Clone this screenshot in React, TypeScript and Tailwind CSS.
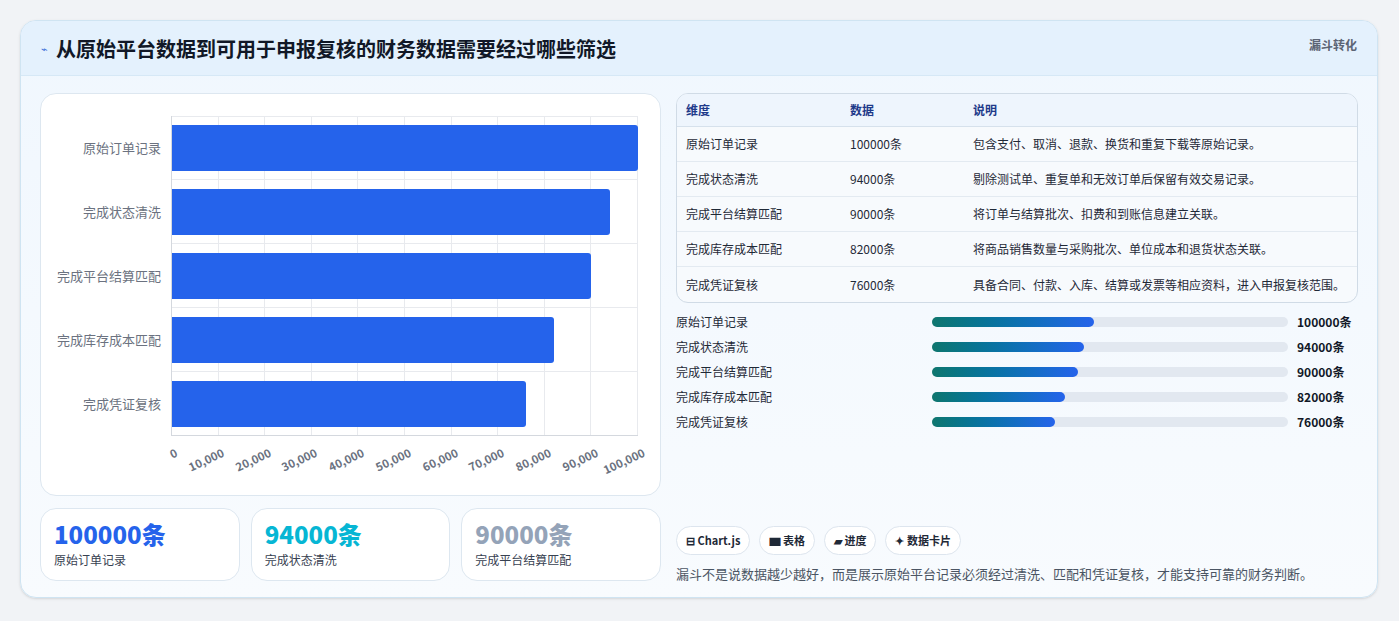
import React from "react";

const rows = [
  { n: "原始订单记录", v: 100000, d: "包含支付、取消、退款、换货和重复下载等原始记录。", p: 162 },
  { n: "完成状态清洗", v: 94000, d: "剔除测试单、重复单和无效订单后保留有效交易记录。", p: 152 },
  { n: "完成平台结算匹配", v: 90000, d: "将订单与结算批次、扣费和到账信息建立关联。", p: 146 },
  { n: "完成库存成本匹配", v: 82000, d: "将商品销售数量与采购批次、单位成本和退货状态关联。", p: 133 },
  { n: "完成凭证复核", v: 76000, d: "具备合同、付款、入库、结算或发票等相应资料，进入申报复核范围。", p: 123 },
];
const ticks = ["0", "10,000", "20,000", "30,000", "40,000", "50,000", "60,000", "70,000", "80,000", "90,000", "100,000"];

export default function App() {
  return (
    <div className="w-[1399px] h-[621px] bg-[#f1f3f6] pt-5 px-5" style={{ fontFamily: "'Noto Sans CJK SC', 'Noto Sans', sans-serif" }}>
      <div className="w-[1358px] h-[578px] rounded-2xl border border-[#cfe4f2] bg-gradient-to-b from-[#f0f7fe] to-[#f8fbfe] overflow-hidden shadow-sm">
        <div className="h-[55px] bg-[#e4f1fd] border-b border-[#d6e8f6] flex items-start justify-between px-5">
          <div className="flex items-center gap-2 h-[55px]">
            <span className="text-[#3b6fd8] text-[11px]">⌁</span>
            <span className="text-[20px] font-bold text-[#111827]">从原始平台数据到可用于申报复核的财务数据需要经过哪些筛选</span>
          </div>
          <span className="text-[12px] font-bold text-[#5b6474] mt-[15px]">漏斗转化</span>
        </div>
        <div className="flex gap-[15px] px-[19px] pt-[17px]">
          <div className="w-[621px] flex flex-col gap-[12px]">
            <div className="h-[403px] rounded-2xl border border-[#dde7f0] bg-white relative">
              <div className="absolute left-[130px] top-[22px] w-[467px] h-[320px] border-l border-b border-[#d4d8de]">
                <div className="absolute inset-0 flex">
                  {ticks.slice(1).map((t) => (
                    <div key={t} className="flex-1 border-r border-[#e8eaee]" />
                  ))}
                </div>
                <div className="absolute left-0 right-0 top-0 border-t border-[#e8eaee]" />
                <div className="absolute inset-0 flex flex-col">
                  {rows.map((r) => (
                    <div key={r.n} className="flex-1 flex items-center relative border-b border-[#e8eaee] last:border-b-0">
                      <span className="absolute right-[477px] text-[13px] text-[#6b7280] whitespace-nowrap">{r.n}</span>
                      <div className="h-[46px] bg-[#2563eb] rounded-r-[3px]" style={{ width: `${(r.v / 100000) * 100}%` }} />
                    </div>
                  ))}
                </div>
              </div>
              {ticks.map((t, i) => (
                <span
                  key={t}
                  className="absolute text-[11.5px] font-bold text-[#6b7280] whitespace-nowrap origin-top-right"
                  style={{ top: 350, right: 621 - 2 - 130 - i * 46.7 - 2, transform: "rotate(-25deg)" }}
                >
                  {t}
                </span>
              ))}
            </div>
            <div className="flex gap-[11px]">
              {[
                ["100000条", "原始订单记录", "text-[#2563eb]"],
                ["94000条", "完成状态清洗", "text-[#06b6d4]"],
                ["90000条", "完成平台结算匹配", "text-[#94a3b8]"],
              ].map(([a, b, c]) => (
                <div key={b} className="w-[200px] h-[73px] rounded-2xl border border-[#dde7f0] bg-white px-[13px] pt-[10px]">
                  <div className={`text-[24px] font-extrabold leading-[30px] ${c}`}>{a}</div>
                  <div className="text-[12px] text-[#374151] mt-[2px]">{b}</div>
                </div>
              ))}
            </div>
          </div>
          <div className="flex-1 flex flex-col">
            <div className="rounded-xl border border-[#d0dbe6] bg-[#f7fafd] overflow-hidden text-[12px]">
              <div className="h-[33px] bg-[#eef5fd] border-b border-[#d6e1ec] flex items-center px-[9px] font-bold text-[#1e3a8a]">
                <span className="w-[164px]">维度</span>
                <span className="w-[123px]">数据</span>
                <span>说明</span>
              </div>
              {rows.map((r, i) => (
                <div key={r.n} className={`h-[35px] flex items-center px-[9px] text-[#1f2937] ${i < 4 ? "border-b border-[#e3eaf1]" : ""}`}>
                  <span className="w-[164px]">{r.n}</span>
                  <span className="w-[123px]">{r.v}条</span>
                  <span>{r.d}</span>
                </div>
              ))}
            </div>
            <div className="flex flex-col gap-[7px] mt-[10px] text-[12px]">
              {rows.map((r) => (
                <div key={r.n} className="h-[18px] flex items-center">
                  <span className="w-[256px] text-[#1f2937]">{r.n}</span>
                  <div className="w-[356px] h-[10px] rounded-full bg-[#e2e8f0]">
                    <div className="h-full rounded-full bg-gradient-to-r from-[#0f766e] to-[#2563eb]" style={{ width: r.p }} />
                  </div>
                  <span className="ml-[9px] font-bold text-[#111827]">{r.v}条</span>
                </div>
              ))}
            </div>
            <div className="flex gap-[9px] mt-[95px]">
              {["⊟ Chart.js", "▆ 表格", "▰ 进度", "✦ 数据卡片"].map((t) => (
                <span key={t} className="h-[29px] px-[9px] rounded-full border border-[#dde5ee] bg-white text-[11px] font-bold text-[#1f2937] flex items-center">{t}</span>
              ))}
            </div>
            <div className="mt-[9px] text-[13px] text-[#4b5563]">漏斗不是说数据越少越好，而是展示原始平台记录必须经过清洗、匹配和凭证复核，才能支持可靠的财务判断。</div>
          </div>
        </div>
      </div>
    </div>
  );
}
